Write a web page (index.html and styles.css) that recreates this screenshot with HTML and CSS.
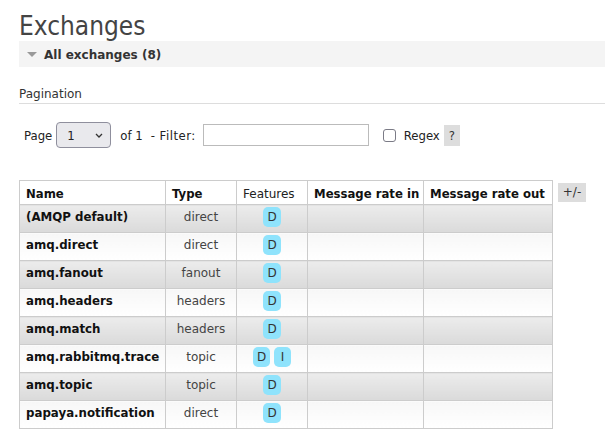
FILE: index.html
```html
<!DOCTYPE html>
<html>
<head>
<meta charset="utf-8">
<link rel="stylesheet" href="styles.css">
</head>
<body>
<div class="main">
  <h1 class="title">Exchanges</h1>
  <div class="section-bar"><span class="tri"></span><span class="section-label">All exchanges (8)</span></div>
  <h3 class="sub">Pagination</h3>
  <div class="filter-row">
    <span class="lbl">Page</span>
    <span class="select-wrap">
      <select class="page-select"><option>1</option></select>
      <svg class="chev" width="8" height="5" viewBox="0 0 8 5"><path d="M1 1 L4 4 L7 1" fill="none" stroke="#333" stroke-width="1.3"/></svg>
    </span>
    <span class="lbl of">of 1</span>
    <span class="lbl dash">- Filter:</span>
    <input class="filter-input" type="text">
    <input class="chk" type="checkbox">
    <span class="lbl regex">Regex</span>
    <span class="help">?</span>
  </div>
  <div class="table-row">
    <table class="list">
      <colgroup>
        <col class="c-name"><col class="c-type"><col class="c-feat"><col class="c-in"><col class="c-out">
      </colgroup>
      <thead>
        <tr><th class="b">Name</th><th class="b">Type</th><th class="n">Features</th><th class="b">Message rate in</th><th class="b">Message rate out</th></tr>
      </thead>
      <tbody>
        <tr class="alt1"><td class="name">(AMQP default)</td><td class="type">direct</td><td class="feat"><abbr class="badge">D</abbr></td><td></td><td></td></tr>
        <tr class="alt2"><td class="name">amq.direct</td><td class="type">direct</td><td class="feat"><abbr class="badge">D</abbr></td><td></td><td></td></tr>
        <tr class="alt1"><td class="name">amq.fanout</td><td class="type">fanout</td><td class="feat"><abbr class="badge">D</abbr></td><td></td><td></td></tr>
        <tr class="alt2"><td class="name">amq.headers</td><td class="type">headers</td><td class="feat"><abbr class="badge">D</abbr></td><td></td><td></td></tr>
        <tr class="alt1"><td class="name">amq.match</td><td class="type">headers</td><td class="feat"><abbr class="badge">D</abbr></td><td></td><td></td></tr>
        <tr class="alt2"><td class="name">amq.rabbitmq.trace</td><td class="type">topic</td><td class="feat"><abbr class="badge">D</abbr> <abbr class="badge">I</abbr></td><td></td><td></td></tr>
        <tr class="alt1"><td class="name">amq.topic</td><td class="type">topic</td><td class="feat"><abbr class="badge">D</abbr></td><td></td><td></td></tr>
        <tr class="alt2"><td class="name">papaya.notification</td><td class="type">direct</td><td class="feat"><abbr class="badge">D</abbr></td><td></td><td></td></tr>
      </tbody>
    </table>
    <span class="plusminus">+/-</span>
  </div>
</div>
</body>
</html>
```
FILE: styles.css
```css
html, body {
  margin: 0;
  padding: 0;
  background: #fff;
}
body {
  font-family: "DejaVu Sans", Verdana, sans-serif;
  font-size: 12px;
  color: #222;
  overflow: hidden;
}
.main {
  padding: 11px 0 0 19px;
}
.title {
  margin: 0;
  font-family: "DejaVu Sans Condensed", "DejaVu Sans", sans-serif;
  font-stretch: condensed;
  font-weight: normal;
  font-size: 26px;
  line-height: 30px;
  color: #444;
}
.section-bar {
  display: flex;
  align-items: center;
  height: 26px;
  background: #f4f4f4;
}
.tri {
  width: 0;
  height: 0;
  margin-left: 8px;
  margin-top: 1px;
  border-left: 5px solid transparent;
  border-right: 5px solid transparent;
  border-top: 5px solid #999;
}
.section-label {
  margin-left: 7px;
  font-weight: bold;
  font-size: 12px;
  line-height: 26px;
  color: #333;
  padding-top: 1px;
}
.sub {
  margin: 18px 0 0 0;
  font-weight: normal;
  font-size: 12px;
  line-height: 16px;
  padding-top: 1px;
  padding-bottom: 1px;
  border-bottom: 1px solid #ddd;
  color: #333;
}
.filter-row {
  display: flex;
  align-items: center;
  height: 26px;
  margin-top: 18px;
  padding-left: 5px;
  font-family: "DejaVu Sans Condensed", "DejaVu Sans", sans-serif;
  font-stretch: condensed;
  font-size: 13px;
  color: #222;
}
.select-wrap {
  position: relative;
  display: inline-block;
  margin-left: 4px;
  height: 26px;
}
.page-select {
  appearance: none;
  -webkit-appearance: none;
  width: 55px;
  height: 26px;
  padding: 0 0 0 10px;
  margin: 0;
  border: 1px solid #8f8f9d;
  border-radius: 4px;
  background: #e9e9ed;
  font-family: "DejaVu Sans Condensed", "DejaVu Sans", sans-serif;
  font-stretch: condensed;
  font-size: 13px;
  color: #222;
}
.chev {
  position: absolute;
  left: 39px;
  top: 11px;
}
.of {
  margin-left: 9px;
}
.dash {
  margin-left: 8px;
  letter-spacing: 0.5px;
}
.filter-input {
  width: 166px;
  height: 22px;
  box-sizing: border-box;
  margin: 0 0 0 7px;
  border: 1px solid #bbb;
  padding: 0 3px;
  background: #fff;
}
.chk {
  appearance: none;
  -webkit-appearance: none;
  width: 13px;
  height: 13px;
  box-sizing: border-box;
  margin: 0 0 0 14px;
  border: 1.5px solid #7b7b86;
  border-radius: 3px;
  background: #fff;
}
.regex {
  margin-left: 8px;
}
.help {
  margin-left: 4px;
  width: 16px;
  height: 21px;
  line-height: 21px;
  text-align: center;
  background: #ddd;
  color: #333;
}
.table-row {
  display: flex;
  align-items: flex-start;
  margin-top: 32px;
}
.list {
  border-collapse: collapse;
  table-layout: fixed;
  width: 533px;
}
.c-name { width: 146px; }
.c-type { width: 71px; }
.c-feat { width: 71px; }
.c-in { width: 116px; }
.c-out { width: 129px; }
.list th {
  border: 1px solid #ccc;
  background: #fff;
  text-align: left;
  padding: 5px 6px 2px;
  line-height: 16px;
  font-size: 11.7px;
  color: #111;
  white-space: nowrap;
}
.list th.b { font-weight: bold; }
.list th.n { font-weight: normal; color: #222; font-size: 12px; }
.list td {
  border: 1px solid #ccc;
  padding: 2px 6px 5px;
  line-height: 20px;
  font-size: 12px;
  white-space: nowrap;
}
.alt1 td {
  background: linear-gradient(#ececec, #dadada);
}
.alt2 td {
  background: linear-gradient(#f7f7f7, #ffffff);
}
.list td.name {
  font-weight: bold;
  font-size: 11.8px;
  color: #111;
}
.list td.type {
  text-align: center;
  color: #444;
}
.list td.feat {
  text-align: center;
}
.badge {
  display: inline-block;
  height: 20px;
  line-height: 20px;
  padding: 0 4px;
  min-width: 9px;
  border-radius: 5px;
  background: #8fe3fc;
  color: #333;
  font-size: 12px;
  text-decoration: none;
  vertical-align: baseline;
}
.plusminus {
  margin-left: 5px;
  margin-top: 3px;
  width: 28px;
  height: 19px;
  line-height: 19px;
  text-align: center;
  background: #ddd;
  color: #333;
  font-size: 12px;
}
```
